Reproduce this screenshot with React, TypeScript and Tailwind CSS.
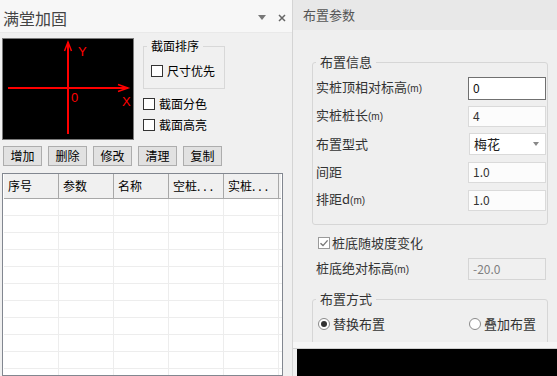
import React from "react";

const cols = ["序号", "参数", "名称", "空桩", "实桩"];

function Check({ checked }: { checked?: boolean }) {
  return (
    <span
      className={
        "flex h-[12px] w-[12px] shrink-0 items-center justify-center border bg-white " +
        (checked ? "border-[#9a9a9a]" : "border-[#333]")
      }
    >
      {checked && (
        <svg width="10" height="10" viewBox="0 0 10 10">
          <path d="M1.5 5.2 L4 7.6 L8.6 2.4" fill="none" stroke="#777" strokeWidth="1.4" />
        </svg>
      )}
    </span>
  );
}

function Radio({ on }: { on?: boolean }) {
  return (
    <span className="flex h-[12px] w-[12px] shrink-0 items-center justify-center rounded-full border border-[#8a8a8a] bg-white">
      {on && <span className="h-[6px] w-[6px] rounded-full bg-[#333]" />}
    </span>
  );
}

// "(m)" is drawn narrow in the original dialog
function Unit() {
  return <span className="font-['Liberation_Sans',sans-serif] text-[10px]">(m)</span>;
}

function Axes() {
  return (
    <svg width="130" height="100" viewBox="0 0 130 100" shapeRendering="crispEdges">
      <g stroke="#ff0000" strokeWidth="1.5" fill="none">
        <line x1="65" y1="3" x2="65" y2="95" />
        <path d="M61.5 12 L65 3 L68.5 12" shapeRendering="auto" />
        <line x1="5" y1="49" x2="125" y2="49" />
        <path d="M115 45.5 L125 49 L115 52.5" shapeRendering="auto" />
      </g>
      <g fill="#ff0000" fontFamily="Liberation Sans, Arial, sans-serif" fontSize="13">
        <text x="75" y="17">Y</text>
        <text x="68" y="63">0</text>
        <text x="119" y="67">X</text>
      </g>
    </svg>
  );
}

function LeftPanel() {
  return (
    <div className="flex w-[292px] shrink-0 flex-col">
      <div className="flex h-[33px] items-center justify-between border-b border-[#e9e9e9] bg-[#f7f7f7] pl-[3px] pr-[6px] pt-[3px]">
        <span className="text-[16px] leading-[20px] text-[#444]">满堂加固</span>
        <div className="flex items-center gap-[12px]">
          <svg width="8" height="5" viewBox="0 0 8 5">
            <path d="M0 0 H8 L4 5 Z" fill="#777" />
          </svg>
          <svg width="8" height="8" viewBox="0 0 8 8">
            <path d="M1 1 L7 7 M7 1 L1 7" stroke="#666" strokeWidth="1.5" />
          </svg>
        </div>
      </div>

      <div className="flex pl-[2px] pt-[5px]">
        <div className="h-[102px] w-[132px] border border-[#7a7a7a] bg-black">
          <Axes />
        </div>
        <div className="ml-[9px] flex flex-col text-[12px] text-black">
          <fieldset className="h-[51px] w-[82px] border border-[#d8d8d8] pl-[3px]">
            <legend className="px-[4px] leading-[16px]">截面排序</legend>
            <div className="ml-[4px] mt-[9px] flex h-[16px] items-center gap-[4px]">
              <Check />
              <span>尺寸优先</span>
            </div>
          </fieldset>
          <div className="mt-[7px] flex h-[16px] items-center gap-[4px]">
            <Check />
            <span>截面分色</span>
          </div>
          <div className="mt-[5px] flex h-[16px] items-center gap-[4px]">
            <Check />
            <span>截面高亮</span>
          </div>
        </div>
      </div>

      <div className="mt-[6px] flex gap-[6px] pl-[3px]">
        {["增加", "删除", "修改", "清理", "复制"].map((b) => (
          <button
            key={b}
            className="flex h-[20px] w-[39px] items-center justify-center border border-[#adadad] bg-[#e1e1e1] text-[12px] leading-none text-black"
          >
            {b}
          </button>
        ))}
      </div>

      <div className="ml-[2px] mt-[7px] w-[281px] flex-1 overflow-hidden border border-[#828790] bg-white pl-[1px]">
        <div className="flex h-[25px]">
          {cols.map((c, i) => (
            <div
              key={c}
              className="flex w-[55px] items-center border-b border-r border-[#a8a8a8] bg-[#f0f0f0] pl-[4px] text-[12px] text-black"
            >
              {c}
              {i > 2 && <span className="tracking-[3px]">...</span>}
            </div>
          ))}
          <div className="w-[2px] border-b border-[#a8a8a8] bg-[#f0f0f0]" />
        </div>
        {Array.from({ length: 11 }).map((_, r) => (
          <div key={r} className="flex h-[17px] border-b border-[#ededed]">
            {cols.map((c) => (
              <div key={c} className="w-[55px] border-r border-[#ededed]" />
            ))}
          </div>
        ))}
      </div>
    </div>
  );
}

function Field({ label, value, focus, disabled }: { label: React.ReactNode; value: string; focus?: boolean; disabled?: boolean }) {
  return (
    <div className="flex h-[28px] items-center justify-between">
      <span>{label}</span>
      <div
        className={
          "flex w-[78px] items-center border pl-[4px] text-[12px] " +
          (focus
            ? "h-[23px] border-[#707070] bg-white text-[#111]"
            : disabled
            ? "h-[22px] border-[#d5d5d5] bg-[#f0f0f0] text-[#808080]"
            : "h-[21px] border-[#dadada] bg-[#fcfcfc] text-[#333]")
        }
      >
        {value}
      </div>
    </div>
  );
}

function RightPanel() {
  return (
    <div className="flex flex-1 flex-col border-l border-[#d4d4d4]">
      <div className="flex h-[349px] flex-col border-b border-[#cfcfcf]">
        <div className="flex h-[30px] items-center bg-[#e8e8e8] pl-[10px] text-[13px] text-[#555]">布置参数</div>
        <div className="h-[312px] overflow-hidden bg-[#efefef] pl-[19px] pr-[9px] pt-[24px] text-[13px] text-[#333]">
          <fieldset className="rounded-[3px] border border-[#d6d6d6] pb-[10px] pl-[3px] pr-[1px]">
            <legend className="px-[4px] leading-[16px]">布置信息</legend>
            <div className="mt-[4px]">
              <Field label={<>实桩顶相对标高<Unit /></>} value="0" focus />
              <Field label={<>实桩桩长<Unit /></>} value="4" />
              <div className="flex h-[28px] items-center justify-between">
                <span>布置型式</span>
                <div className="flex h-[22px] w-[77px] items-center justify-between border border-[#dadada] bg-white pl-[4px] pr-[6px] text-[13px] text-[#222]">
                  <span>梅花</span>
                  <svg width="6" height="4" viewBox="0 0 6 4">
                    <path d="M0 0 H6 L3 4 Z" fill="#888" />
                  </svg>
                </div>
              </div>
              <Field label="间距" value="1.0" />
              <Field label={<>排距d<Unit /></>} value="1.0" />
            </div>
          </fieldset>

          <div className="ml-[6px] mt-[10px] flex h-[16px] items-center gap-[2px]">
            <Check checked />
            <span>桩底随坡度变化</span>
          </div>
          <div className="ml-[4px] mr-[2px] mt-[4px]">
            <Field label={<>桩底绝对标高<Unit /></>} value="-20.0" disabled />
          </div>

          <fieldset className="mt-[8px] rounded-[3px] border border-[#d6d6d6] pb-[20px] pl-[3px] pr-[1px]">
            <legend className="px-[4px] leading-[16px]">布置方式</legend>
            <div className="mt-[5px] flex h-[24px] items-center">
              <div className="ml-[2px] flex w-[151px] items-center gap-[3px]">
                <Radio on />
                <span>替换布置</span>
              </div>
              <div className="flex items-center gap-[3px]">
                <Radio />
                <span>叠加布置</span>
              </div>
            </div>
          </fieldset>
        </div>
        <div className="flex-1 bg-[#f6f6f6]" />
      </div>
      <div className="flex flex-1">
        <div className="w-[4px] bg-[#f0f0f0]" />
        <div className="flex-1 bg-black" />
      </div>
    </div>
  );
}

export default function App() {
  return (
    <div className="flex h-[376px] w-[557px] overflow-hidden bg-[#f0f0f0] font-['Noto_Sans_CJK_SC',sans-serif] leading-[16px]">
      <LeftPanel />
      <RightPanel />
    </div>
  );
}
